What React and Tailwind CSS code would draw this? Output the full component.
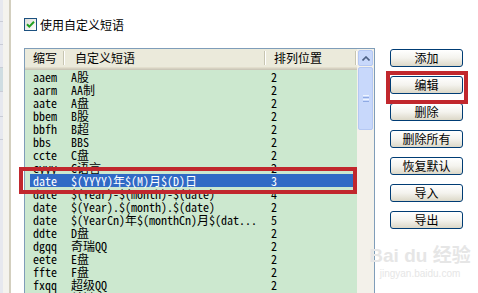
import React from "react";

const FONT = { fontFamily: '"Noto Sans Mono CJK SC", "Liberation Mono", "Noto Sans CJK SC", monospace' };

const rows = [
  ["aaem", "A股", "2"],
  ["aarm", "AA制", "2"],
  ["aate", "A盘", "2"],
  ["bbem", "B股", "2"],
  ["bbfh", "B超", "2"],
  ["bbs", "BBS", "2"],
  ["ccte", "C盘", "2"],
  ["cyyy", "C语言", "2"],
  ["date", "$(YYYY)年$(M)月$(D)日", "3", true],
  ["date", "$(Year)-$(month)-$(date)", "4"],
  ["date", "$(Year).$(month).$(date)", "2"],
  ["date", "$(YearCn)年$(monthCn)月$(dat...", "5"],
  ["ddte", "D盘", "2"],
  ["dgqq", "奇瑞QQ", "2"],
  ["eete", "E盘", "2"],
  ["ffte", "F盘", "2"],
  ["fxqq", "超级QQ", "2"],
  ["gjz", "关键字", "2"],
];

const buttons = ["添加", "编辑", "删除", "删除所有", "恢复默认", "导入", "导出"];

function XpButton({ label }) {
  return (
    <button className="w-[73px] h-[18px] rounded-[3px] border border-[#003c74] bg-gradient-to-b from-white via-[#f4f3ee] to-[#dcd8c8] text-[12px] leading-none text-black flex items-center justify-center">
      {label}
    </button>
  );
}

export default function App() {
  return (
    <div className="relative w-[478px] h-[293px] overflow-hidden bg-white flex" style={FONT}>
      {/* sliver of the left panel */}
      <div className="flex h-full">
        <div className="w-[3px] h-full flex flex-col bg-[#e6e8ef]">
          <div className="h-[22px] border-b border-[#c9ccd6]" />
          <div className="h-[23px] border-b border-[#c9ccd6]" />
          <div className="h-[23px] border-b border-[#c9ccd6]" />
          <div className="h-[24px] border-b border-[#c9ccd6] bg-[#cfdde2]" />
          <div className="h-[25px] border-b border-[#c9ccd6]" />
          <div className="h-[23px] border-b border-[#c9ccd6]" />
        </div>
        <div className="w-[6px] h-full bg-[#f4f3ee]" />
        <div className="w-[2px] h-full bg-[#d3cfbf]" />
      </div>

      <div className="flex flex-col pl-[13px] pt-[18px]">
        {/* checkbox */}
        <div className="flex items-center h-[13px]">
          <div className="w-[13px] h-[13px] border border-[#1c5180] bg-gradient-to-br from-[#dcdcd7] to-white flex items-center justify-center">
            <svg width="9" height="9" viewBox="0 0 9 9">
              <path d="M1 4.2 L3.3 6.6 L8 1.8" fill="none" stroke="#21a121" strokeWidth="2" />
            </svg>
          </div>
          <span className="ml-[3px] text-[12px] leading-[13px] text-black">使用自定义短语</span>
        </div>

        <div className="flex mt-[17px]">
          {/* list view */}
          <div className="w-[351px] h-[260px] border border-[#7f9db9] flex bg-[#cce8cf] overflow-hidden">
            <div className="flex-1 flex flex-col">
              <div className="h-[18px] bg-[#ebeadb] flex items-center text-[12px] leading-[14px] text-black">
                <div className="w-[38px] pl-[8px]">缩写</div>
                <div className="w-[2px] h-[14px] border-l border-[#c7c5b2] bg-white" />
                <div className="w-[199px] pl-[10px]">自定义短语</div>
                <div className="w-[2px] h-[14px] border-l border-[#c7c5b2] bg-white" />
                <div className="flex-1 pl-[8px]">排列位置</div>
                <div className="w-[2px] h-[14px] border-l border-[#c7c5b2] bg-white" />
              </div>
              <div className="h-[1px] bg-[#e2decd]" />
              <div className="h-[1px] bg-[#d6d2c2]" />
              <div className="h-[1px] bg-[#cbc7b8]" />
              {rows.map(([abbr, text, pos, sel], i) => (
                <div key={i} className="h-[13px] pl-[5px] flex">
                  <div
                    className={
                      "flex-1 flex items-center text-[12px] leading-[13px] whitespace-nowrap " +
                      (sel ? "bg-[#316ac5] text-white" : "text-black")
                    }
                  >
                    <div className="w-[35px] pl-[3px]">{abbr}</div>
                    <div className="w-[199px] pl-[6px]">{text}</div>
                    <div className="flex-1 pl-[7px]">{pos}</div>
                  </div>
                </div>
              ))}
            </div>

            {/* scrollbar */}
            <div className="w-[17px] bg-[#f3f1ea] flex flex-col items-center">
              <div className="w-[15px] h-[16px] mt-[1px] rounded-[2px] border border-[#b5c8f3] bg-[#c8d8fb] flex items-center justify-center">
                <svg width="8" height="5" viewBox="0 0 8 5">
                  <path d="M0.5 4.5 L4 1 L7.5 4.5" fill="none" stroke="#4d6185" strokeWidth="1.6" />
                </svg>
              </div>
              <div className="w-[15px] h-[63px] mt-[1px] rounded-[2px] border border-[#b5c8f3] bg-[#c8d8fb] flex flex-col items-center justify-center gap-[1px]">
                <div className="w-[6px] h-[1px] bg-[#eef4fe]" />
                <div className="w-[6px] h-[1px] bg-[#8faae4]" />
                <div className="w-[6px] h-[1px] bg-[#eef4fe]" />
                <div className="w-[6px] h-[1px] bg-[#8faae4]" />
              </div>
            </div>
          </div>

          {/* buttons */}
          <div className="ml-[15px] pt-[1px] flex flex-col gap-[9px]">
            {buttons.map((b) => (
              <XpButton key={b} label={b} />
            ))}
            <div className="mt-[8px] -ml-[26px] w-[112px] flex flex-col items-center text-[#e6e6e6] leading-none whitespace-nowrap">
              <div className="text-[19px] font-bold" style={{ fontFamily: '"Liberation Sans", "Noto Sans CJK SC", sans-serif' }}>Bai du 经验</div>
              <div className="text-[10px] mt-[4px]" style={{ fontFamily: '"Liberation Sans", sans-serif' }}>jingyan.baidu.com</div>
            </div>
          </div>
        </div>
      </div>

      {/* annotation boxes */}
      <div className="absolute left-[19px] top-[167px] w-[338px] h-[27px] border-[4px] border-[#c1272d]" />
      <div className="absolute left-[386px] top-[71px] w-[82px] h-[33px] border-[4px] border-[#c1272d]" />
    </div>
  );
}
